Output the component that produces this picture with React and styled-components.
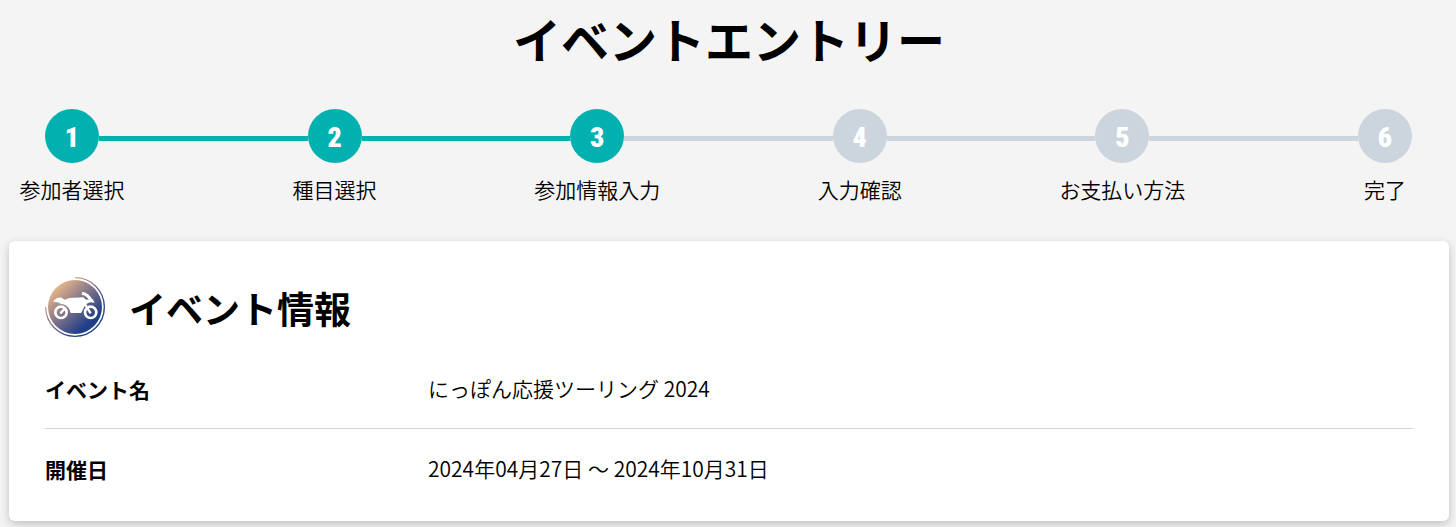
import React from "react";
import styled, { createGlobalStyle } from "styled-components";

const TEAL = "#00b1b0";
const GREY = "#ccd4de";

const GlobalStyle = createGlobalStyle`
  *, *::before, *::after { box-sizing: border-box; }
  body {
    margin: 0;
    background: #f4f4f4;
    color: #000;
    font-family: "Noto Sans CJK JP", sans-serif;
    font-size: 21px;
    font-weight: 350;
    line-height: 32px;
  }
  h1, h2, ol, dl, dd { margin: 0; padding: 0; }
`;

const Page = styled.main`
  padding: 2px 7px 6px 9px;
`;

const Title = styled.h1`
  font-size: 48px;
  font-weight: 700;
  line-height: 72px;
  text-align: center;
`;

const Steps = styled.ol`
  display: flex;
  list-style: none;
  margin: 35px 37px 36px 36px;
`;

const Step = styled.li`
  flex: 1 1 0;
  min-width: 0;
  &:last-child { flex: none; }
`;

const Track = styled.div`
  display: flex;
  align-items: center;
`;

const Marker = styled.span`
  flex: none;
  display: flex;
  align-items: center;
  justify-content: center;
  width: 54px;
  height: 54px;
  padding-top: 4px;
  border-radius: 50%;
  background: ${(p) => (p.$done ? TEAL : GREY)};
  color: #fff;
  font-family: "Roboto Condensed", "Liberation Sans Narrow", sans-serif;
  font-size: 28px;
  font-weight: 900;
`;

const Line = styled.span`
  flex: 1;
  height: 5px;
  margin-top: 5px;
  background: ${(p) => (p.$done ? TEAL : GREY)};
`;

const StepLabel = styled.div`
  display: flex;
  justify-content: center;
  width: 54px;
  margin-top: 10px;
  white-space: nowrap;
`;

const Card = styled.section`
  padding: 36px 36px 13px;
  border-radius: 6px;
  background: #fff;
  box-shadow: 0 3px 10px rgba(0, 0, 0, 0.22);
`;

const CardHeader = styled.header`
  display: flex;
  align-items: center;
  gap: 24px;
  margin-bottom: 12px;
`;

const CardTitle = styled.h2`
  padding-top: 2px;
  font-size: 37px;
  font-weight: 700;
  line-height: 56px;
`;

const Row = styled.div`
  display: grid;
  grid-template-columns: 28% 1fr;
  padding: 23px 0;
  & + & { border-top: 1px solid #d0d4d4; }
`;

const Term = styled.dt`
  padding-top: 1px;
  font-weight: 700;
`;

const BikeSvg = styled.svg`
  flex: none;
  width: 60px;
  height: 60px;
`;

function BikeIcon() {
  return (
    <BikeSvg viewBox="15 21 180 180" aria-hidden="true">
      <defs>
        <linearGradient id="dusk" gradientUnits="userSpaceOnUse" x1="48" y1="50" x2="158" y2="172">
          <stop offset="0" stopColor="#eab68a" />
          <stop offset="0.5" stopColor="#786f88" />
          <stop offset="0.9" stopColor="#1f3f88" />
        </linearGradient>
      </defs>
      <circle cx="105" cy="111" r="81" fill="url(#dusk)" />
      <path d="M105 23A88 88 0 1 1 17 111" fill="none" stroke="url(#dusk)" strokeWidth="4" />
      <g fill="none" stroke="#fff" strokeWidth="8">
        <circle cx="63" cy="127" r="17" />
        <circle cx="152" cy="127" r="17" />
      </g>
      <g fill="none" stroke="#fff" strokeWidth="7">
        <path d="M61 130L76 114M132 98L152 130" />
        <path d="M126 70Q145 74 154 93" strokeWidth="9" />
      </g>
      <path
        fill="#fff"
        d="M40 95C45 86 53 82 64 83L74 89L88 84L130 82L138 89L158 87L164 98L151 97L143 100C137 104 133 109 130 116L123 129L92 129L88 118C83 108 75 103 64 102L53 97Z"
      />
    </BikeSvg>
  );
}

const steps = ["参加者選択", "種目選択", "参加情報入力", "入力確認", "お支払い方法", "完了"];
const current = 3;

const details = [
  ["イベント名", "にっぽん応援ツーリング 2024"],
  ["開催日", "2024年04月27日 ～ 2024年10月31日"],
];

export default function App() {
  return (
    <>
      <GlobalStyle />
      <Page lang="ja">
        <Title>イベントエントリー</Title>
        <Steps>
          {steps.map((label, i) => (
            <Step key={label} aria-current={i + 1 === current ? "step" : undefined}>
              <Track>
                <Marker $done={i < current}>{i + 1}</Marker>
                {i < steps.length - 1 && <Line $done={i + 1 < current} />}
              </Track>
              <StepLabel>{label}</StepLabel>
            </Step>
          ))}
        </Steps>
        <Card>
          <CardHeader>
            <BikeIcon />
            <CardTitle>イベント情報</CardTitle>
          </CardHeader>
          <dl>
            {details.map(([term, value]) => (
              <Row key={term}>
                <Term>{term}</Term>
                <dd>{value}</dd>
              </Row>
            ))}
          </dl>
        </Card>
      </Page>
    </>
  );
}
